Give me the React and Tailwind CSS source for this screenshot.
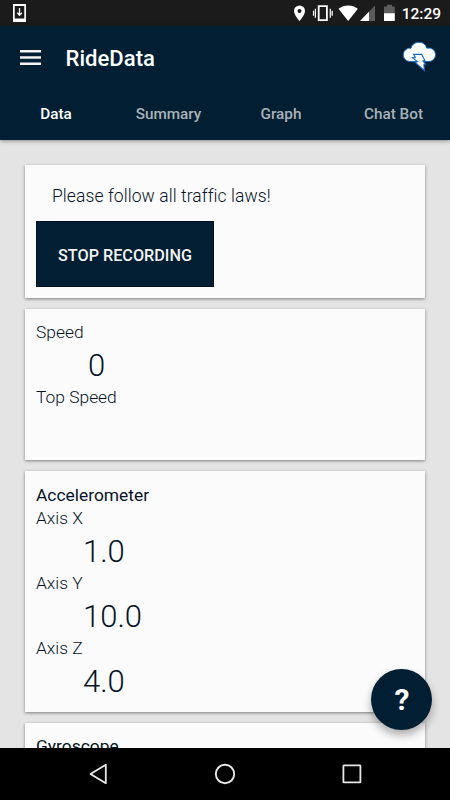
const TABS = [
  { label: 'Data', pos: 'w-[112px]', active: true },
  { label: 'Summary', pos: 'w-[113px]' },
  { label: 'Graph', pos: 'w-[112px]' },
  { label: 'Chat Bot', pos: 'w-[113px]' }
]

const AXES = [
  { label: 'Axis X', value: '1.0' },
  { label: 'Axis Y', value: '10.0' },
  { label: 'Axis Z', value: '4.0' }
]

export default function App() {
  return (
    <div className="relative flex h-[800px] w-[450px] flex-col overflow-hidden bg-[#e4e4e4] font-['Roboto',sans-serif] text-[#061426]">
      <StatusBar />
      <Header />
      <main className="flex min-h-0 flex-1 flex-col gap-[11px] overflow-hidden px-[25px] pt-[25px]">
        <Card className="h-[133px] pt-[11px]">
          <p className="mt-[8px] ml-[16px] text-[17.5px] leading-[24px] font-light tracking-[0.08px]">Please follow all traffic laws!</p>
          <button className="mt-[13px] block h-[66px] w-[178px] border border-[#00101f] bg-[#011e32] pt-[4px] text-[16.2px] font-medium text-[#f4f4f4]">
            STOP RECORDING
          </button>
        </Card>
        <Card className="h-[151px] pt-[12px]">
          <Reading label="Speed" value="0" indent="pl-[52px]" />
          <div className="text-[17.4px] leading-[22px] font-light">Top Speed</div>
        </Card>
        <Card className="h-[241px] pt-[12px]">
          <h2 className="text-[17.4px] leading-[24px] font-normal">Accelerometer</h2>
          {AXES.map(a => (
            <Reading key={a.label} label={a.label} value={a.value} indent="pl-[47px]" />
          ))}
        </Card>
        <Card className="h-[241px] pt-[11px]">
          <h2 className="text-[17.4px] leading-[24px] font-normal">Gyroscope</h2>
        </Card>
      </main>
      <NavBar />
      <button className="absolute top-[669px] left-[371px] flex h-[61px] w-[61px] items-center justify-center rounded-full bg-[#011e32] shadow-[0_5px_8px_rgba(0,0,0,0.32)]">
        <span className="pl-px text-[30px] leading-none font-bold text-white">?</span>
      </button>
    </div>
  )
}

function Card({ className, children }) {
  return (
    <section className={`shrink-0 bg-[#fbfbfb] px-[11px] shadow-[0_1px_3px_rgba(0,0,0,0.45)] ${className}`}>
      {children}
    </section>
  )
}

function Reading({ label, value, indent }) {
  return (
    <div className="h-[65px]">
      <div className="h-[24px] text-[17.4px] leading-[22px] font-light">{label}</div>
      <div className={`text-[31px] leading-[41px] font-light ${indent}`}>{value}</div>
    </div>
  )
}

function Header() {
  return (
    <header className="relative h-[114px] shrink-0 bg-[#011e32] shadow-[0_1px_4px_rgba(0,0,0,0.4)]">
      <div className="flex h-[62px] items-center pr-[13px] pl-[20px]">
        <svg width="21" height="15" viewBox="0 0 21 15" fill="#f4f4f4">
          <path d="M0 0h21v2.4H0zM0 6.3h21v2.4H0zM0 12.6h21V15H0z" />
        </svg>
        <h1 className="ml-[24.5px] pt-[3px] text-[22.1px] font-medium text-white">RideData</h1>
        <svg className="ml-auto" width="35" height="31" viewBox="402.5 42 35 31">
          <path
            d="M409.8 61.5a6.7 6.7 0 1 1 1.6-13.3a8.4 8.4 0 0 1 16 0a6.8 6.8 0 1 1 1.2 13.3z"
            fill="#fff"
            stroke="#1269c0"
            strokeWidth="0.9"
          />
          <path d="M414 54.4h8.2l3.2 6.2-2 .3 2.6 3.3-1.6.4 .5 6-9.2-8.3 2.4-.5-5.2-4.1 3-.4z" fill="#fff" stroke="#1269c0" strokeWidth="1.1" />
        </svg>
      </div>
      <nav className="flex h-[52px] pt-px">
        {TABS.map(t => (
          <div
            key={t.label}
            className={`flex items-center justify-center text-[15.3px] font-medium ${t.pos} ${t.active ? 'text-white' : 'text-[#aab2b8]'}`}
          >
            {t.label}
          </div>
        ))}
      </nav>
    </header>
  )
}

function StatusBar() {
  return (
    <div className="flex h-[26px] shrink-0 items-center bg-[#1b1b1b] pr-[9px] pl-[13px]">
      <svg width="13" height="18" viewBox="0 0 13 18">
        <path d="M0 0h13v18H0zM1.7 2v12.4h9.6V2z" fill="#fff" fillRule="evenodd" />
        <path d="M6.5 4v7M4.2 8.8l2.3 2.4 2.3-2.4" fill="none" stroke="#fff" strokeWidth="1.3" />
      </svg>
      <svg className="ml-auto" width="103" height="18" viewBox="293 4 103 18">
        <path d="M299.5 5.5a5.5 5.5 0 0 0-5.5 5.5c0 4 5.5 10 5.5 10s5.5-6 5.5-10a5.5 5.5 0 0 0-5.5-5.5zm0 3.6a2 2 0 1 1 0 4 2 2 0 0 1 0-4z" fill="#fff" fillRule="evenodd" />
        <path d="M318.7 6.2h8.2v14h-8.2z" fill="none" stroke="#fff" strokeWidth="1.8" />
        <path d="M315.4 8.7v9M313.5 10.7v5M330.3 8.7v9M332.2 10.7v5" stroke="#fff" strokeWidth="1.2" />
        <path d="M348.2 21l-9.7-12.2c5.5-4.5 13.9-4.5 19.4 0z" fill="#fff" />
        <path d="M360 21l15-15.5V21z" fill="#5d5d5d" />
        <path d="M360 21l9-9.3V21z" fill="#fff" />
        <path d="M387 4.8h5v1.7h2.8v6.7H384V6.5h3z" fill="#5d5d5d" />
        <path d="M384 13.2h10.8V21H384z" fill="#fff" />
      </svg>
      <span className="ml-[6px] pt-[2px] text-[15.5px] leading-[18px] font-medium text-white">12:29</span>
    </div>
  )
}

function NavBar() {
  return (
    <div className="relative flex h-[52px] shrink-0 items-center justify-between bg-black pr-[88px] pl-[89px]">
      <svg width="18" height="22" viewBox="0 0 18 22" fill="none" stroke="#e8e8e8" strokeWidth="1.8">
        <path d="M16.8 1.8v18.4L1.5 11z" strokeLinejoin="round" />
      </svg>
      <svg width="22" height="22" viewBox="0 0 22 22" fill="none" stroke="#e8e8e8" strokeWidth="1.9">
        <circle cx="11" cy="11" r="9.2" />
      </svg>
      <svg width="20" height="20" viewBox="0 0 20 20" fill="none" stroke="#e8e8e8" strokeWidth="1.8">
        <rect x="1.4" y="1.4" width="17" height="17" rx="0.5" />
      </svg>
    </div>
  )
}
